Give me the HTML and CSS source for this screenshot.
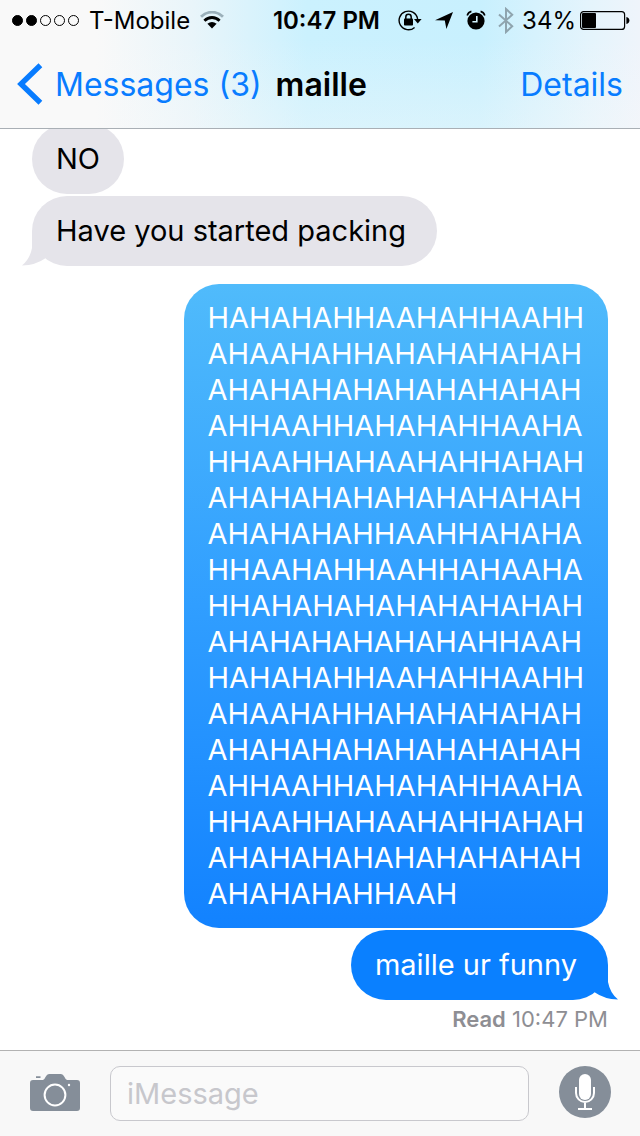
FILE: index.html
```html
<!DOCTYPE html>
<html lang="en">
<head>
    <meta charset="UTF-8">
    <meta name="viewport" content="width=device-width, initial-scale=1.0">
    <title>maille</title>
    <link rel="stylesheet" href="styles.css">
</head>
<body>
    <header class="header">
        <div class="status-bar">
            <div class="status-left">
                <div class="signal">
                    <span class="dot full"></span>
                    <span class="dot full"></span>
                    <span class="dot"></span>
                    <span class="dot"></span>
                    <span class="dot"></span>
                </div>
                <span>T-Mobile</span>
                <svg width="24" height="18" viewBox="0 0 24 18" fill="none" stroke-width="2.8">
                    <path d="M1 5.8C7-.4 17-.4 23 5.8" stroke="#9bb0ba"/>
                    <path d="M4.4 9.8C8.8 5.4 15.2 5.4 19.6 9.8" stroke="#000"/>
                    <path d="M7.4 12.8Q12 9 16.6 12.8L12 17.6Z" fill="#000"/>
                </svg>
            </div>
            <span class="time">10:47 PM</span>
            <div class="status-right">
                <svg width="24" height="22" viewBox="0 0 24 22">
                    <path d="M16.6 18.4A9.3 9.3 0 1 1 19.6 10" fill="none" stroke="#000" stroke-width="1.4"/>
                    <path d="M16 10h7.6l-3.8 4.4z"/>
                    <rect x="6" y="9.6" width="9" height="7" rx=".8"/>
                    <path d="M7.8 10V8a2.7 2.7 0 0 1 5.4 0v2" fill="none" stroke="#000" stroke-width="1.5"/>
                </svg>
                <svg width="20" height="19" viewBox="0 0 20 19">
                    <path d="M19 1L12.4 18L10.8 9.4L1 9.2Z"/>
                </svg>
                <svg width="20" height="20" viewBox="0 0 20 20">
                    <circle cx="10" cy="11" r="8.6"/>
                    <path d="M1.2 5.4Q2.2 2.2 5.4 1.4M18.8 5.4Q17.8 2.2 14.6 1.4" fill="none" stroke="#000" stroke-width="1.6"/>
                    <path d="M10.8 6v5.8H6.4" fill="none" stroke="#d4f3fd" stroke-width="1.6"/>
                </svg>
                <svg width="16" height="27" viewBox="0 0 16 27">
                    <path d="M1 7.4L14.2 19.2L8 25V2L14.2 7.8L1 19.6" fill="none" stroke="#8fa4ae" stroke-width="2"/>
                </svg>
                <span class="percent">34%</span>
                <svg width="50" height="19" viewBox="0 0 50 19">
                    <rect x=".6" y=".6" width="44" height="17.8" rx="3" fill="none" stroke="#000" stroke-width="1.2"/>
                    <rect x="2" y="2" width="14" height="15" rx="1"/>
                    <path d="M46.4 6Q49.4 6.6 49.4 9.5T46.4 13Z"/>
                </svg>
            </div>
        </div>
        <nav class="nav">
            <a href="#" class="back">
                <svg width="26" height="42" viewBox="0 0 26 42">
                    <path d="M23.4 2.2L4 21L23.4 39.8" fill="none" stroke="#087cff" stroke-width="5.4"/>
                </svg>
                Messages (3)
            </a>
            <h1 class="title">maille</h1>
            <a href="#" class="details">Details</a>
        </nav>
    </header>

    <main class="chat">
        <div class="bubble received">NO</div>
        <div class="bubble received last">
            Have you started packing
            <svg class="tail" width="30" height="35" viewBox="0 0 30 35"><path d="M10 0V17Q8 28 0 34.5Q14 34 23 27.5L30 20V0Z"/></svg>
        </div>
        <div class="sent-group">
            <div class="bubble sent long">HAHAHAHHAAHAHHAAHH<br>AHAAHAHHAHAHAHAHAH<br>AHAHAHAHAHAHAHAHAH<br>AHHAAHHAHAHAHHAAHA<br>HHAAHHAHAAHAHHAHAH<br>AHAHAHAHAHAHAHAHAH<br>AHAHAHAHHAAHHAHAHA<br>HHAAHAHHAAHHAHAAHA<br>HHAHAHAHAHAHAHAHAH<br>AHAHAHAHAHAHAHHAAH<br>HAHAHAHHAAHAHHAAHH<br>AHAAHAHHAHAHAHAHAH<br>AHAHAHAHAHAHAHAHAH<br>AHHAAHHAHAHAHHAAHA<br>HHAAHHAHAAHAHHAHAH<br>AHAHAHAHAHAHAHAHAH<br>AHAHAHAHHAAH</div>
            <div class="bubble sent last">
                maille ur funny
                <svg class="tail" width="30" height="35" viewBox="0 0 30 35"><path d="M20 0V17Q22 28 30 34.5Q16 34 7 27.5L0 20V0Z"/></svg>
            </div>
        </div>
        <p class="receipt"><b>Read</b> 10:47 PM</p>
    </main>

    <form class="composer">
        <button type="button" class="icon-button" aria-label="Camera">
            <svg width="50" height="38" viewBox="0 0 50 38">
                <path fill="#858e99" d="M3 7H13Q14.5 6.5 15.5 4Q17 1 19 1H31Q33 1 34.5 4Q35.5 6.5 37 7H47Q50 7 50 10V35Q50 38 47 38H3Q0 38 0 35V10Q0 7 3 7ZM6 3.2H10.5V5H6Z"/>
                <circle cx="25" cy="22" r="10.4" fill="none" stroke="#fff" stroke-width="2"/>
                <circle cx="39" cy="12" r="1.2" fill="#fff"/>
            </svg>
        </button>
        <input type="text" class="message-input" placeholder="iMessage" aria-label="iMessage">
        <button type="button" class="icon-button" aria-label="Record audio">
            <svg width="52" height="52" viewBox="0 0 52 52">
                <circle cx="26" cy="26" r="26" fill="#858e99"/>
                <rect x="20" y="8" width="12" height="26" rx="6" fill="#fff"/>
                <path d="M17 21V27A9 9 0 0 0 35 27V21M26 36V43M19 43H33" fill="none" stroke="#fff" stroke-width="2"/>
            </svg>
        </button>
    </form>
</body>
</html>
```
FILE: styles.css
```css
* {
    box-sizing: border-box;
}
body {
    display: flex;
    flex-direction: column;
    height: 100vh;
    margin: 0;
    font-family: Inter, "Liberation Sans", sans-serif;
    background-color: #fff;
    color: #000;
}
svg {
    display: block;
    flex-shrink: 0;
}
a {
    color: #087cff;
    text-decoration: none;
}

/* header */
.header {
    flex-shrink: 0;
    border-bottom: 1px solid #a9afb5;
    background:
        linear-gradient(to bottom, rgba(249,249,249,0) 30%, rgba(249,249,249,0.35) 100%),
        linear-gradient(to right, #f9f9f9 15%, #e9f5fa 30%, #cbf1fe 48%, #c8f0fe 75%, #e4f4fc 92%, #eff4fb 100%);
}
.status-bar {
    display: grid;
    grid-template-columns: 1fr auto 250px;
    align-items: center;
    height: 40px;
    padding: 0 10px 0 12px;
    font-size: 24px;
}
.status-left,
.status-right {
    display: flex;
    align-items: center;
    gap: 12px;
}
.status-left {
    gap: 10px;
}
.status-right {
    justify-content: flex-end;
}
.signal {
    display: flex;
    gap: 3px;
}
.dot {
    width: 11px;
    height: 11px;
    border: 1px solid #000;
    border-radius: 50%;
}
.full {
    background-color: #000;
}
.time {
    font-weight: 600;
}
.percent {
    margin: 0 -8px 0 -4px;
}
.nav {
    display: flex;
    align-items: center;
    height: 88px;
    padding: 0 17px;
    font-size: 32px;
}
.back {
    display: flex;
    align-items: center;
    gap: 12px;
}
.title {
    margin: 0 0 0 14px;
    font-size: 32px;
    font-weight: 600;
}
.details {
    margin-left: auto;
}

/* messages */
.chat {
    flex: 1;
    display: flex;
    flex-direction: column;
    justify-content: flex-end;
    align-items: flex-start;
    gap: 2px;
    min-height: 0;
    padding: 0 32px 18px;
    overflow: hidden;
}
.bubble {
    position: relative;
    flex-shrink: 0;
    padding: 17px 24px;
    border-radius: 35px;
    font-size: 29px;
    line-height: 36px;
}
.received {
    background-color: #e5e4ea;
    fill: #e5e4ea;
}
.sent {
    color: #fff;
    background-color: #0a80ff;
    fill: #0a80ff;
}
.long {
    padding: 16px 24px;
    background: linear-gradient(to bottom, #50bbfb, #309eff 50%, #1282ff);
}
.last {
    padding-right: 31px;
}
.sent-group {
    display: flex;
    flex-direction: column;
    align-items: flex-end;
    align-self: flex-end;
    flex-shrink: 0;
    gap: 2px;
    margin-top: 16px;
}
/* tail covers the bottom corner of the last bubble */
.tail {
    position: absolute;
    bottom: 0;
}
.received .tail {
    left: -10px;
}
.sent .tail {
    right: -10px;
}
.receipt {
    align-self: flex-end;
    flex-shrink: 0;
    margin: 4px 0 0;
    font-size: 22px;
    line-height: 26px;
    color: #8e8e93;
}
.receipt b {
    font-weight: 600;
}

/* message box */
.composer {
    display: flex;
    align-items: flex-start;
    flex-shrink: 0;
    gap: 30px;
    height: 86px;
    padding: 15px 29px 0 30px;
    border-top: 1px solid #b2b2b2;
    background-color: #f8f8f8;
}
.icon-button {
    height: 52px;
    padding: 0;
    border: none;
    background: none;
}
.message-input {
    flex: 1;
    min-width: 0;
    height: 55px;
    padding: 0 16px;
    border: 1px solid #c8c8cd;
    border-radius: 10px;
    background-color: #fafafa;
    font-family: inherit;
    font-size: 29px;
}
.message-input::placeholder {
    color: #c7c7cc;
}
```
